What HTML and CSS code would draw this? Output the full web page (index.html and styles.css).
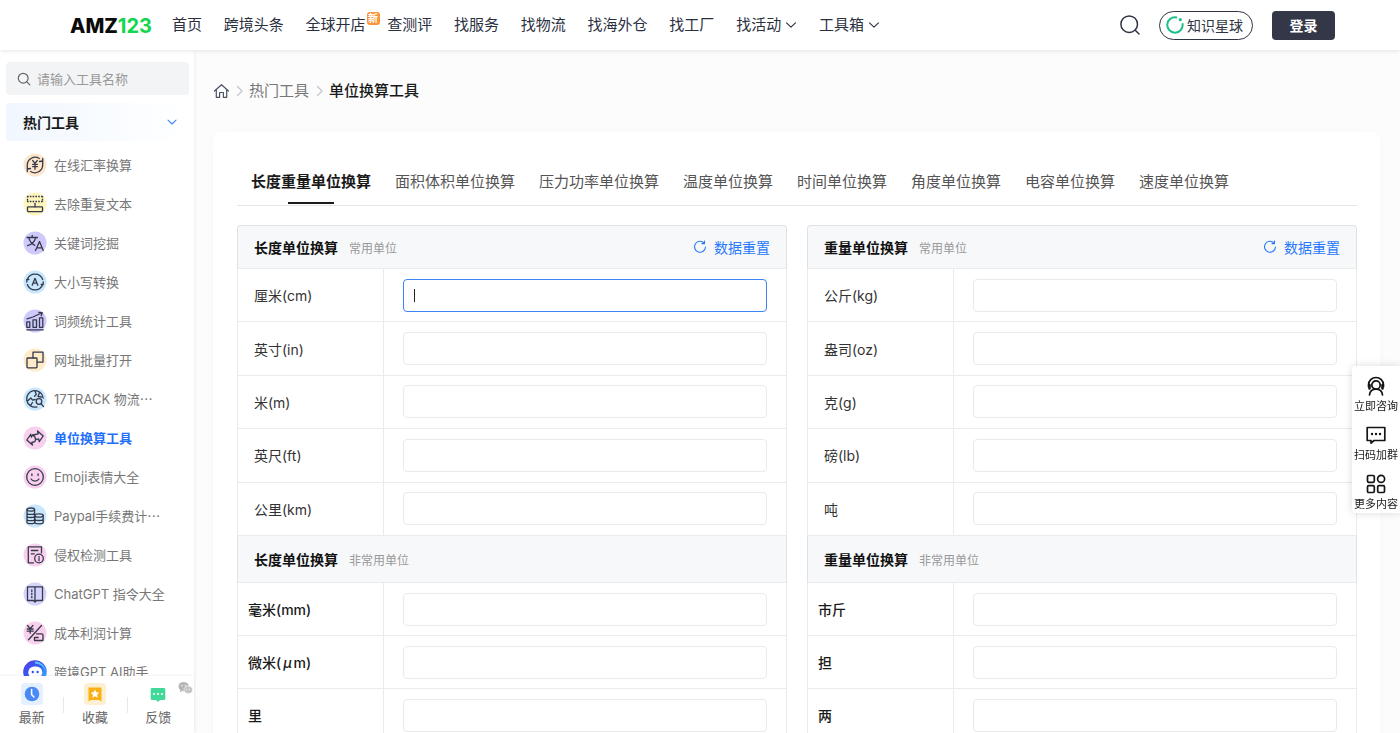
FILE: index.html
```html
<!DOCTYPE html>
<html lang="zh-CN">
<head>
<meta charset="utf-8">
<title>单位换算工具 - AMZ123</title>
<link rel="stylesheet" href="styles.css">
</head>
<body>
<div class="app">
  <header class="topbar">
    <a class="logo" href="#">AMZ<span class="logo-num">123</span></a>
    <nav class="nav">
      <a href="#">首页</a>
      <a href="#">跨境头条</a>
      <a href="#" class="has-badge">全球开店<span class="badge">新</span></a>
      <a href="#">查测评</a>
      <a href="#">找服务</a>
      <a href="#">找物流</a>
      <a href="#">找海外仓</a>
      <a href="#">找工厂</a>
      <a href="#" class="nav-drop">找活动<svg class="chev" viewBox="0 0 12 12"><path d="M1.5 3.8 6 8.2l4.500-4.400"/></svg></a>
      <a href="#" class="nav-drop">工具箱<svg class="chev" viewBox="0 0 12 12"><path d="M1.5 3.8 6 8.2l4.500-4.400"/></svg></a>
    </nav>
    <div class="actions">
      <button class="icon-btn" type="button" aria-label="搜索"><svg viewBox="0 0 20 20" width="20" height="20"><circle cx="9.200" cy="9.200" r="8.300"/><path d="m15.300 15.300 3.700 3.700"/></svg></button>
      <a class="pill" href="#"><svg viewBox="0 0 18 18" width="18" height="18"><path d="M10.300 1.400A7.700 7.700 0 1 0 16.600 8"/><circle class="dot" cx="14.300" cy="3.700" r="1.600"/></svg>知识星球</a>
      <button class="login" type="button">登录</button>
    </div>
  </header>

  <div class="body">
    <aside class="sidebar">
      <label class="search"><svg viewBox="0 0 14 14" width="14" height="14"><circle cx="6.200" cy="6.200" r="4.900"/><path d="m9.800 9.800 3 3"/></svg><input type="text" placeholder="请输入工具名称" aria-label="请输入工具名称"></label>
      <button class="group" type="button">热门工具<svg class="chev" viewBox="0 0 12 12"><path d="M2 4.200 6 8l4-3.800"/></svg></button>
      <ul class="tools">
        <li><a href="#"><svg class="ico orange" viewBox="0 0 24 24"><circle class="bg" cx="12" cy="12" r="11.500"/><path d="M4.300 18.500V12a7.800 7.800 0 0 1 12-6.500M19.700 5.500V12a7.800 7.800 0 0 1-12 6.500M16.500 8.500l3.200-.5M7.500 15.500l-3.200.5M9.700 7.500 12 10.300l2.300-2.800M12 10.300v6M9.600 11.300h4.800M9.600 13.600h4.800"/></svg>在线汇率换算</a></li>
        <li><a href="#"><svg class="ico yellow" viewBox="0 0 24 24"><circle class="bg" cx="12" cy="12" r="11.500"/><path class="dash" d="M4 4.500h16M4 9.500h16M4.500 4v6M19.500 4v6"/><path d="M12 11.500v3.300"/><rect x="4.500" y="14.800" width="15" height="4.800" rx=".8"/></svg>去除重复文本</a></li>
        <li><a href="#"><svg class="ico violet" viewBox="0 0 24 24"><circle class="bg" cx="12" cy="12" r="11.500"/><path d="M4 6.500h10.500M9.200 4.300v2.200M5.800 6.800c1 4 3.500 6.200 6 7.500M12.600 6.800c-1 4-4 6.700-8 7.900M12.500 19.500l4-9 3.700 9M13.700 16.800h5.400"/></svg>关键词挖掘</a></li>
        <li><a href="#"><svg class="ico sky" viewBox="0 0 24 24"><circle class="bg" cx="12" cy="12" r="11.500"/><path d="M4.300 9.500a8.200 8.200 0 0 1 15.400 0M19.700 14.500a8.200 8.200 0 0 1-15.400 0M3.800 12V9.500h2M20.200 12v2.500h-2M9.200 15.300l2.800-7 2.800 7M10.200 13.200h3.600"/></svg>大小写转换</a></li>
        <li><a href="#"><svg class="ico violet" viewBox="0 0 24 24"><circle class="bg" cx="12" cy="12" r="11.500"/><path d="M3.800 12.800h3v5.500h-3zM10 10.800h3.500v7.500H10zM16.500 8.800h3.300v9.500h-3.300zM3.800 20.800h16.500M4 9.800l6-1.800 8.500-4M15.800 3.300l3.400.4-1 3.100"/></svg>词频统计工具</a></li>
        <li><a href="#"><svg class="ico amber" viewBox="0 0 24 24"><circle class="bg" cx="12" cy="12" r="11.500"/><path d="M10 10V4.200h10v9.900h-5.800"/><rect x="4" y="10" width="10" height="9.800" rx=".8"/></svg>网址批量打开</a></li>
        <li><a href="#"><svg class="ico sky" viewBox="0 0 24 24"><circle class="bg" cx="12" cy="12" r="11.500"/><path d="M14 19.900A8.300 8.300 0 1 1 20.200 11M4.500 14l3.300-3 1.900 2.200 2.500-.7M7.500 18.500l2-3M12 4l1.300 3.500-1.800 1.800M16.500 5.500 15 9.500l3.500.5"/><circle cx="16" cy="14.500" r="2.800"/><path d="m18 16.800 2.600 2.800"/></svg>17TRACK 物流<span class="cjk">…</span></a></li>
        <li class="active"><a href="#" aria-current="page"><svg class="ico pink" viewBox="0 0 24 24"><circle class="bg" cx="12" cy="12" r="11.500"/><path d="m14.500 5 5.700 5-4 5.700-.6-2.800-2.900.8-1-3-2-1.700 5.500-1.200zM9.500 19l-5.700-5 4-5.700.6 2.800 1.300-2.300 2 1.700 1 3-.9 2.200-3 .8z"/></svg>单位换算工具</a></li>
        <li><a href="#"><svg class="ico pink" viewBox="0 0 24 24"><circle class="bg" cx="12" cy="12" r="11.500"/><circle cx="12" cy="12" r="8.300"/><path d="M8.900 9v1.500M15.100 9v1.500M8 14c1.800 2.800 6.200 2.800 8 0"/></svg>Emoji表情大全</a></li>
        <li><a href="#"><svg class="ico sky" viewBox="0 0 24 24"><circle class="bg" cx="12" cy="12" r="11.500"/><ellipse cx="7.800" cy="5.600" rx="3.800" ry="1.600"/><path d="M4 5.600v12.600c0 2 7.600 2 7.600 0V5.600M4 8.900c0 2 7.600 2 7.600 0M4 12c0 2 7.600 2 7.600 0M4 15.200c0 2 7.600 2 7.600 0"/><ellipse cx="16" cy="11.500" rx="4.200" ry="1.700"/><path d="M11.800 11.500v6.800c0 2.100 8.400 2.100 8.400 0v-6.800M11.800 15c0 2 8.400 2 8.400 0"/></svg>Paypal手续费计<span class="cjk">…</span></a></li>
        <li><a href="#"><svg class="ico pink" viewBox="0 0 24 24"><circle class="bg" cx="12" cy="12" r="11.500"/><path d="M10.500 19.800H5.300V3.800h13.200v6M8.300 7.500h6.500M8.300 10.800h3"/><circle cx="16" cy="15.500" r="4.300"/><path d="M16 13.500v.8M16 15.500v2.300"/></svg>侵权检测工具</a></li>
        <li><a href="#"><svg class="ico lilac" viewBox="0 0 24 24"><circle class="bg" cx="12" cy="12" r="11.500"/><path d="M4.500 4.800h15v13.700h-6L12 20l-1.500-1.500h-6zM12 5v14M8.800 8v1.400M8.800 11.200v1.400M8.800 14.300v1.400"/></svg>ChatGPT 指令大全</a></li>
        <li><a href="#"><svg class="ico pink" viewBox="0 0 24 24"><circle class="bg" cx="12" cy="12" r="11.500"/><path d="m4.500 4.500 2.700 3.200 2.700-3.200M7.200 7.700v4.500M4.200 8h6M4.200 10.200h6M18.500 4.500l-13 14.300M13.500 12.800h5.300c.7 0 1.200.5 1.200 1.200v5.500h-8.500v-3h3.700"/></svg>成本利润计算</a></li>
        <li><a href="#"><svg class="ico bot" viewBox="0 0 24 24"><defs><linearGradient id="botFill" x1="0" y1="0" x2="1" y2="1"><stop offset="0" stop-color="#5a37e8"/><stop offset=".5" stop-color="#2f62f2"/><stop offset="1" stop-color="#45d3fb"/></linearGradient></defs><circle cx="12" cy="12" r="11.800" fill="url(#botFill)"/><path fill="#62c8fa" d="M12 1.500A10.500 10.500 0 0 1 22.500 12c-1-5-5-8-10.500-8.500z"/><rect x="5.300" y="6.500" width="14" height="12" rx="6" fill="#fff"/><circle cx="9.800" cy="12" r="1.200" fill="#2f55e8"/><circle cx="14.600" cy="12" r="1.200" fill="#2f55e8"/></svg>跨境GPT AI助手</a></li>
      </ul>
      <div class="dock">
        <a href="#"><svg viewBox="0 0 22 22"><rect width="22" height="22" rx="4" fill="#e4f0ff"/><circle cx="11" cy="11" r="7.300" fill="#4a8af4"/><path d="M10.600 6.500v5l2.300 2.500" fill="none" stroke="#fff" stroke-width="1.500" stroke-linecap="round"/></svg>最新</a>
        <a href="#"><svg viewBox="0 0 22 22"><rect width="22" height="22" rx="4" fill="#fdefd2"/><path d="M4.500 4.500h13v14l-2.500-1.500h-8l-2.500 1.500z" fill="#fbb016"/><path d="m11 6.500 1.300 2.700 3 .4-2.200 2.100.5 3-2.600-1.400-2.600 1.400.5-3-2.200-2.100 3-.4z" fill="#fff"/></svg>收藏</a>
        <a href="#"><svg viewBox="0 0 22 22"><path d="M5 5h12a1.300 1.300 0 0 1 1.300 1.300v9.400A1.300 1.300 0 0 1 17 17h-4l-2 2-2-2H5a1.300 1.300 0 0 1-1.300-1.300V6.300A1.300 1.300 0 0 1 5 5z" fill="#41d99a"/><g fill="#fff"><circle cx="7" cy="11" r="1.100"/><circle cx="11" cy="11" r="1.100"/><circle cx="15" cy="11" r="1.100"/></g></svg>反馈</a>
        <svg class="wechat" viewBox="0 0 16 14"><ellipse cx="6" cy="5.500" rx="5.500" ry="4.900" fill="#b5b5b5"/><path d="m2.500 9-.7 2.500L5 10z" fill="#b5b5b5"/><ellipse cx="11" cy="9" rx="4.700" ry="4.100" fill="#c4c4c4" stroke="#fff" stroke-width=".6"/><g fill="#fff"><circle cx="4.200" cy="4.500" r=".7"/><circle cx="7.800" cy="4.500" r=".7"/><circle cx="9.500" cy="8.300" r=".6"/><circle cx="12.500" cy="8.300" r=".6"/></g></svg>
      </div>
    </aside>

    <main class="main">
      <nav class="crumbs" aria-label="面包屑">
        <a href="#" aria-label="首页"><svg class="home" viewBox="0 0 16 16"><path d="M1.500 8 8.500 1.700 15.500 8M3.300 6.800v7.500h3.300V9.500h3.800v4.800h3.300V6.800"/></svg></a>
        <svg class="sep" viewBox="0 0 7 12"><path d="m1.500 1.500 4.500 4.500-4.500 4.500"/></svg>
        <a href="#">热门工具</a>
        <svg class="sep" viewBox="0 0 7 12"><path d="m1.500 1.500 4.500 4.500-4.500 4.500"/></svg>
        <strong>单位换算工具</strong>
      </nav>

      <section class="card">
        <div class="tabs" role="tablist">
          <button type="button" role="tab" aria-selected="true" class="tab current">长度重量单位换算</button>
          <button type="button" role="tab" class="tab">面积体积单位换算</button>
          <button type="button" role="tab" class="tab">压力功率单位换算</button>
          <button type="button" role="tab" class="tab">温度单位换算</button>
          <button type="button" role="tab" class="tab">时间单位换算</button>
          <button type="button" role="tab" class="tab">角度单位换算</button>
          <button type="button" role="tab" class="tab">电容单位换算</button>
          <button type="button" role="tab" class="tab">速度单位换算</button>
        </div>

        <div class="panels">
          <section class="panel">
            <header class="panel-head first"><h2>长度单位换算</h2><span>常用单位</span><button type="button" class="reset"><svg viewBox="0 0 14 14"><path d="M11.200 3.200A5.500 5.500 0 1 0 12.500 7M11.500 1v2.600H8.900"/></svg>数据重置</button></header>
            <table class="units common">
              <tr><th scope="row"><label for="cm">厘米(cm)</label></th><td><div class="field focused"><input id="cm" type="text"></div></td></tr>
              <tr><th scope="row"><label for="in">英寸(in)</label></th><td><div class="field"><input id="in" type="text"></div></td></tr>
              <tr><th scope="row"><label for="m">米(m)</label></th><td><div class="field"><input id="m" type="text"></div></td></tr>
              <tr><th scope="row"><label for="ft">英尺(ft)</label></th><td><div class="field"><input id="ft" type="text"></div></td></tr>
              <tr><th scope="row"><label for="km">公里(km)</label></th><td><div class="field"><input id="km" type="text"></div></td></tr>
            </table>
            <header class="panel-head"><h2>长度单位换算</h2><span>非常用单位</span></header>
            <table class="units rare">
              <tr><th scope="row"><label for="mm">毫米(mm)</label></th><td><div class="field"><input id="mm" type="text"></div></td></tr>
              <tr><th scope="row"><label for="um">微米(<i class="mu">μ</i>m)</label></th><td><div class="field"><input id="um" type="text"></div></td></tr>
              <tr><th scope="row"><label for="li">里</label></th><td><div class="field"><input id="li" type="text"></div></td></tr>
            </table>
          </section>

          <section class="panel">
            <header class="panel-head first"><h2>重量单位换算</h2><span>常用单位</span><button type="button" class="reset"><svg viewBox="0 0 14 14"><path d="M11.200 3.200A5.500 5.500 0 1 0 12.500 7M11.500 1v2.600H8.900"/></svg>数据重置</button></header>
            <table class="units common">
              <tr><th scope="row"><label for="kg">公斤(kg)</label></th><td><div class="field"><input id="kg" type="text"></div></td></tr>
              <tr><th scope="row"><label for="oz">盎司(oz)</label></th><td><div class="field"><input id="oz" type="text"></div></td></tr>
              <tr><th scope="row"><label for="g">克(g)</label></th><td><div class="field"><input id="g" type="text"></div></td></tr>
              <tr><th scope="row"><label for="lb">磅(lb)</label></th><td><div class="field"><input id="lb" type="text"></div></td></tr>
              <tr><th scope="row"><label for="ton">吨</label></th><td><div class="field"><input id="ton" type="text"></div></td></tr>
            </table>
            <header class="panel-head"><h2>重量单位换算</h2><span>非常用单位</span></header>
            <table class="units rare">
              <tr><th scope="row"><label for="jin">市斤</label></th><td><div class="field"><input id="jin" type="text"></div></td></tr>
              <tr><th scope="row"><label for="dan">担</label></th><td><div class="field"><input id="dan" type="text"></div></td></tr>
              <tr><th scope="row"><label for="liang">两</label></th><td><div class="field"><input id="liang" type="text"></div></td></tr>
            </table>
          </section>
        </div>
      </section>
    </main>
  </div>

  <div class="float">
    <a href="#"><svg viewBox="0 0 20 20"><path d="M2.500 10.500V9a7.500 7.500 0 0 1 15 0v1.500"/><path d="M3.500 9v3.500M16.500 9v3.500" stroke-width="2.600"/><circle cx="10" cy="9" r="4.200"/><path d="M3.500 19c.4-3.600 3-5.800 6.500-5.800s6.100 2.200 6.500 5.800"/></svg>立即咨询</a>
    <a href="#"><svg viewBox="0 0 20 20"><path d="M1.200 2.500h17.600v13H8l-3 2.700v-2.700H1.200z"/><g class="dots"><circle cx="6" cy="9" r="1.200"/><circle cx="10" cy="9" r="1.200"/><circle cx="14" cy="9" r="1.200"/></g></svg>扫码加群</a>
    <a href="#"><svg viewBox="0 0 20 20"><rect x="1.500" y="1.500" width="6.800" height="6.800" rx="1.200"/><circle cx="15.100" cy="4.900" r="3.500"/><rect x="1.500" y="11.700" width="6.800" height="6.800" rx="1.200"/><rect x="11.700" y="11.700" width="6.800" height="6.800" rx="1.200"/></svg>更多内容</a>
  </div>
</div>
</body>
</html>
```
FILE: styles.css
```css
* { box-sizing: border-box; }

body {
  margin: 0;
  font-family: Inter, "Noto Sans CJK SC", sans-serif;
  font-size: 14px;
  color: #333;
  background: #fcfcfd;
}

a { color: inherit; text-decoration: none; }
button { font: inherit; color: inherit; background: none; border: 0; padding: 0; cursor: pointer; }
h2, ul { margin: 0; padding: 0; }
ul { list-style: none; }
svg { flex: none; fill: none; stroke: none; stroke-linecap: round; stroke-linejoin: round; }

.app { height: 100vh; display: flex; flex-direction: column; overflow: hidden; }

/* top bar */
.topbar {
  position: relative;
  z-index: 2;
  display: flex;
  align-items: center;
  height: 50px;
  flex: none;
  padding: 0 65px 0 70px;
  background: #fff;
  box-shadow: 0 1px 4px rgba(0, 0, 0, .1);
}
.logo { width: 102px; padding-top: 1px; font-size: 20px; line-height: 24px; font-weight: 800; color: #0b0b0b; }
.logo-num { font-weight: 700; color: #12d64f; }
.nav {
  flex: 0 1 708px;
  display: flex;
  justify-content: space-between;
  font-size: 15px;
  line-height: 24px;
  color: #2b303f;
  white-space: nowrap;
}
.has-badge { position: relative; }
.badge {
  position: absolute;
  left: 61px;
  top: -1px;
  width: 13px;
  height: 13px;
  border-radius: 3px;
  background: #fb9436;
  color: #fff;
  font-size: 10px;
  line-height: 13px;
  font-weight: 700;
  text-align: center;
}
.nav-drop { display: flex; align-items: center; gap: 4px; }
.chev { width: 12px; height: 12px; stroke: currentColor; stroke-width: 1.1; }
.actions { display: flex; align-items: center; gap: 19px; margin-left: auto; }
.icon-btn { display: flex; }
.icon-btn svg { stroke: #2f3442; stroke-width: 1.5; }
.pill {
  display: flex;
  align-items: center;
  gap: 3px;
  height: 29px;
  padding: 0 9px 0 6px;
  border: 1px solid #2f3442;
  border-radius: 15px;
  color: #2f3442;
}
.pill svg { stroke: #1fbf8a; stroke-width: 2; }
.pill .dot { fill: #1fbf8a; stroke: none; }
.login { width: 63px; height: 29px; border-radius: 4px; background: #333747; color: #fff; font-weight: 700; }

.body {
  flex: 1;
  min-height: 0;
  display: grid;
  grid-template-columns: 194px minmax(0, 1fr);
  grid-template-rows: minmax(0, 1fr);
}

/* sidebar */
.sidebar {
  display: flex;
  flex-direction: column;
  min-height: 0;
  padding-top: 12px;
  background: #fff;
  box-shadow: 1px 0 3px rgba(0, 0, 0, .05);
}
.search {
  display: flex;
  align-items: center;
  gap: 6px;
  height: 33px;
  flex: none;
  margin: 0 5px 8px 6px;
  padding: 0 11px;
  border-radius: 4px;
  background: #f3f4f5;
}
.search svg { stroke: #666; stroke-width: 1.2; }
.search input { flex: 1; min-width: 0; padding: 0; border: 0; outline: 0; background: none; font: inherit; font-size: 13px; }
.search input::placeholder { color: #999; }
.group {
  display: flex;
  align-items: center;
  justify-content: space-between;
  height: 38px;
  flex: none;
  margin: 0 5px 4px 6px;
  padding: 0 11px 0 17px;
  border-radius: 4px;
  background: linear-gradient(90deg, #f1f7ff, #fff);
  font-weight: 700;
  color: #1a1a1a;
}
.group .chev { color: #3b86f6; }
.tools { flex: 1; min-height: 0; overflow: hidden; }
.tools a {
  display: flex;
  align-items: center;
  height: 39px;
  padding-left: 23px;
  font-size: 13px;
  color: #777;
  white-space: nowrap;
}
.tools .active a { color: #1f6ffb; font-weight: 700; }
.cjk { font-family: "Noto Sans CJK SC", sans-serif; }
.ico { width: 24px; height: 24px; margin-right: 7px; stroke: #34394a; stroke-width: 1.3; }
.ico .bg { stroke: none; }
.ico .dash { stroke-dasharray: 1.6 1.2; stroke-linecap: butt; }
.orange .bg { fill: #fde6cc; }
.yellow .bg { fill: #fff6bd; }
.violet .bg { fill: #cfc9fb; }
.lilac .bg { fill: #d5d3fc; }
.sky .bg { fill: #c8e6fc; }
.amber .bg { fill: #feebc9; }
.pink .bg { fill: #f9d0ee; }
.bot { stroke: none; }
.dock {
  position: relative;
  display: grid;
  grid-template-columns: repeat(3, 1fr);
  flex: none;
  height: 57px;
  padding: 7px 4px 0 0;
  background: #fff;
  box-shadow: 0 -1px 3px rgba(0, 0, 0, .05);
}
.dock a { display: flex; flex-direction: column; align-items: center; gap: 2px; font-size: 13px; line-height: 20px; color: #666; }
.dock a svg { width: 22px; height: 22px; }
.dock a + a { background: linear-gradient(#e8e8e8, #e8e8e8) no-repeat 0 14px / 1px 16px; }
.wechat { position: absolute; right: 1px; top: 5px; width: 15px; height: 14px; }

/* main */
.main { min-width: 0; padding: 30px 20px 0 19px; }
.crumbs { display: flex; align-items: center; height: 22px; margin-bottom: 30px; font-size: 15px; line-height: 20px; color: #777; }
.crumbs a { display: flex; }
.crumbs strong { font-weight: 500; color: #1a1a1a; }
.home { width: 16px; height: 16px; stroke: #4b5464; stroke-width: 1.2; }
.sep { width: 7px; height: 12px; margin: 0 6px 0 7px; stroke: #c3c6cc; stroke-width: 1.2; }
.card { padding: 24px 23px 24px 24px; border-radius: 8px; background: #fff; box-shadow: 0 0 12px rgba(0, 0, 0, .02); }
.tabs { display: flex; gap: 24px; margin-bottom: 19px; padding-left: 14px; border-bottom: 1px solid #e3e5e7; }
.tab { position: relative; padding: 14px 0 11px; font-size: 15px; line-height: 24px; color: #555; white-space: nowrap; }
.tab.current { font-weight: 700; color: #1a1a1a; }
.tab.current::after {
  content: "";
  position: absolute;
  left: 50%;
  bottom: 1px;
  width: 46px;
  height: 2px;
  margin-left: -23px;
  background: #1a1a1a;
}

.panels { display: grid; grid-template-columns: 1fr 1fr; gap: 20px; }
.panel-head {
  display: flex;
  align-items: center;
  gap: 11px;
  height: 47px;
  padding: 0 16px;
  border: 1px solid #dfe2e4;
  border-width: 0 1px 1px;
  border-bottom-color: #e9ebed;
  background: #f7f8fa;
}
.panel-head.first { height: 44px; border-top-width: 1px; border-radius: 4px 4px 0 0; }
.panel-head h2 { font-size: 14px; font-weight: 700; color: #111; }
.panel-head span { font-size: 12px; color: #999; }
.reset { display: flex; align-items: center; gap: 7px; margin-left: auto; color: #2878fa; }
.reset svg { width: 14px; height: 14px; stroke: currentColor; stroke-width: 1.1; }

.units { width: 100%; border-spacing: 0; border-left: 1px solid #e9ebed; border-right: 1px solid #e9ebed; }
.units.common { height: 267px; }
.units th, .units td { height: 53px; padding: 0; border-bottom: 1px solid #e9ebed; }
.units th { width: 146px; padding-left: 16px; border-right: 1px solid #e9ebed; font-weight: 400; text-align: left; color: #333; }
.units td { padding: 0 19px; }
.rare th { padding-left: 10px; font-weight: 500; color: #1a1a1a; }
.mu { padding: 0 2px; }
.field { position: relative; display: flex; }
.field input {
  width: 100%;
  height: 33px;
  padding: 0 10px;
  border: 1px solid #e8eaec;
  border-radius: 4px;
  background: #fff;
  font: inherit;
  outline: 0;
}
.field.focused input { border-color: #3d84f7; }
.field.focused::after {
  content: "";
  position: absolute;
  left: 11px;
  top: 10px;
  width: 1px;
  height: 13px;
  background: #222;
}

/* floating shortcuts */
.float {
  position: fixed;
  z-index: 3;
  right: 0;
  top: 366px;
  display: grid;
  gap: 11px;
  width: 48px;
  padding: 10px 0 1px;
  border-radius: 4px 0 0 4px;
  background: #fff;
  box-shadow: 0 0 8px rgba(0, 0, 0, .14);
}
.float a { display: flex; flex-direction: column; align-items: center; font-size: 11px; line-height: 16px; color: #222; }
.float svg { width: 20px; height: 20px; margin-bottom: 2px; stroke: #151515; stroke-width: 1.7; }
.float .dots { fill: #151515; stroke: none; }
```
